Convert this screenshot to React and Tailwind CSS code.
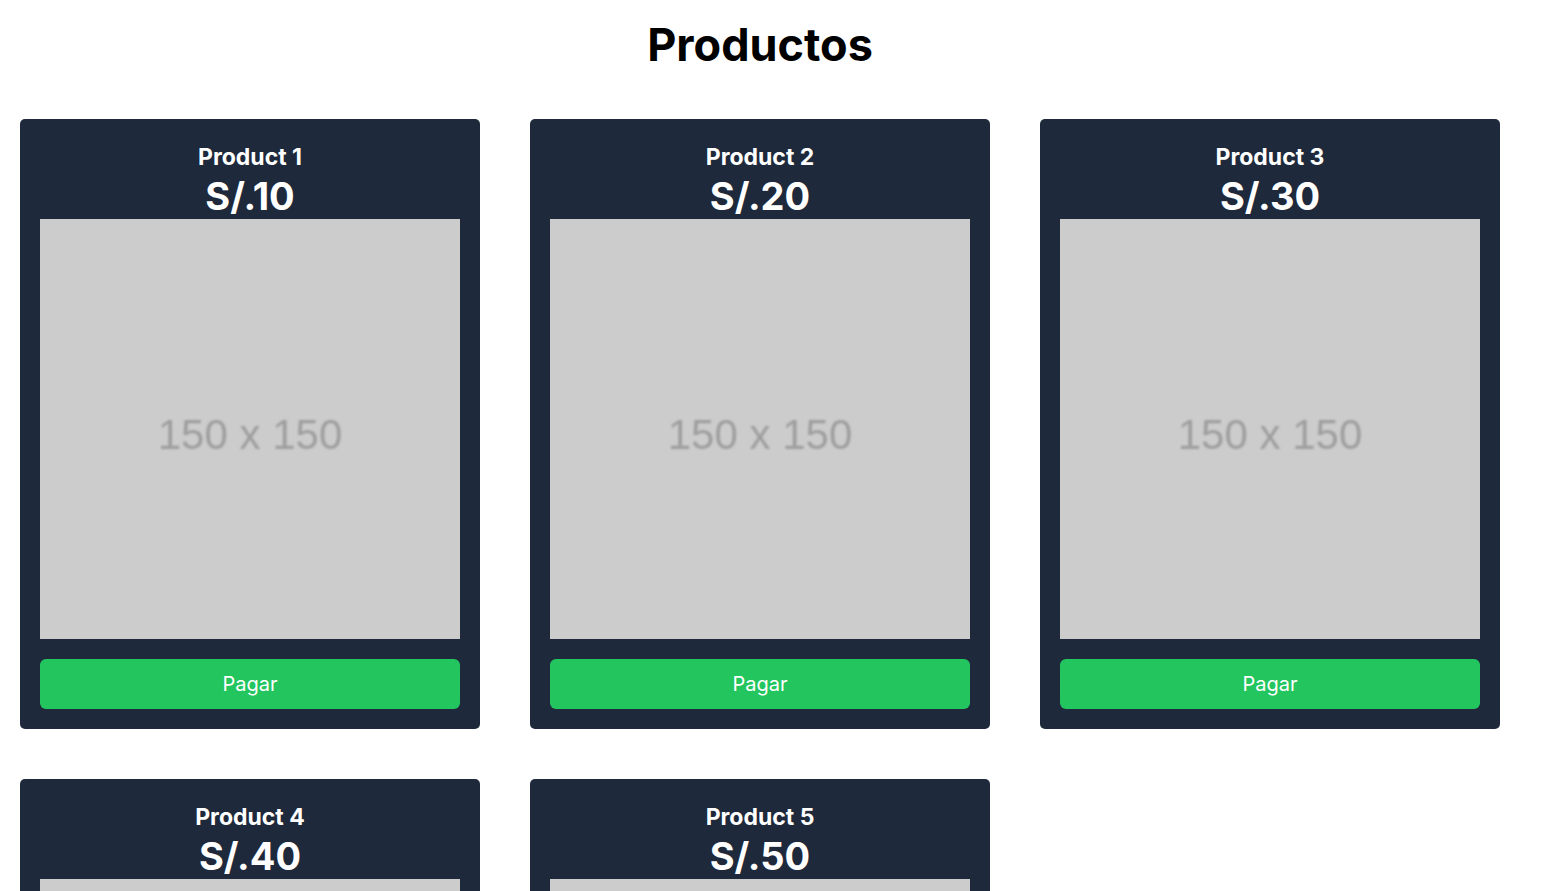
import React from "react";

const products = [
  { name: "Product 1", price: "S/.10" },
  { name: "Product 2", price: "S/.20" },
  { name: "Product 3", price: "S/.30" },
  { name: "Product 4", price: "S/.40" },
  { name: "Product 5", price: "S/.50" },
];

function Card({ p }) {
  return (
    <div className="w-[460px] bg-[#1e293b] rounded-[5px] p-5 flex flex-col items-center">
      <div className="pt-[4px] mb-[1px] flex flex-col items-center text-white">
        <div className="text-[23px] leading-[28px] font-bold">{p.name}</div>
        <div className="mt-[3px] text-[38px] leading-[44px] font-bold">{p.price}</div>
      </div>
      <div className="w-[420px] h-[420px] bg-[#cccccc] flex items-center justify-center">
        <span
          className="text-[42px] text-[#9e9e9e] blur-[0.9px] pt-[10px]"
          style={{ fontFamily: '"Liberation Sans", Arial, sans-serif' }}
        >
          150 x 150
        </span>
      </div>
      <button className="mt-5 w-full h-[50px] rounded-md bg-[#22c55e] text-white text-[20px]">
        Pagar
      </button>
    </div>
  );
}

export default function App() {
  return (
    <div
      className="w-[1520px] bg-white px-5"
      style={{ fontFamily: 'Inter, "Noto Sans", sans-serif' }}
    >
      <h1 className="text-center text-[45px] font-bold leading-[56px] pt-[17px] pb-[46px] text-black">
        Productos
      </h1>
      <div className="flex flex-wrap gap-[50px] pb-10">
        {products.map((p) => (
          <Card key={p.name} p={p} />
        ))}
      </div>
    </div>
  );
}
